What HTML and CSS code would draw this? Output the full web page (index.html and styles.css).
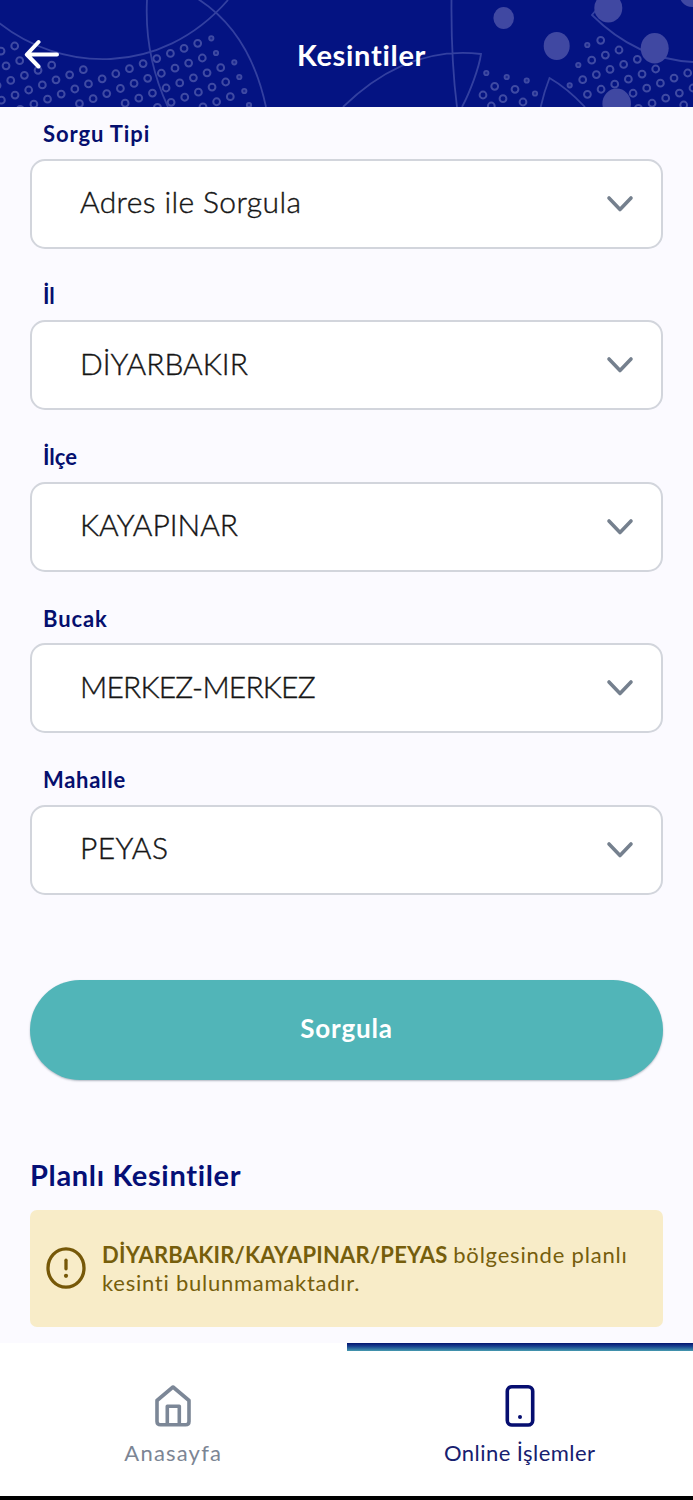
FILE: index.html
```html
<!DOCTYPE html>
<html lang="tr">
<head>
<meta charset="utf-8">
<title>Kesintiler</title>
<link rel="stylesheet" href="styles.css">
</head>
<body>
<div class="app">
  <header class="header">
    <svg class="header-art" viewBox="0 0 693 107" width="693" height="107" aria-hidden="true">
      <defs>
        <g id="dots">
          <path d="M14.7 46l-27.3 10.2M19.7 60.7l-27.3 10.2M51.7 65.2l-68.3 25.4M83.3 69.7l-109.2 40.6M197.7 43.3l-177.5 66M202.3 58l-136.5 50.8M220.7 67.7l-109.2 40.6M225.7 82l-68.3 25.4M230.3 96.7l-41 15.2"/>
          <path d="M600.7 40.3l-.1 0M619 50l-27.4 10.2M637.3 59.3l-55 20.5M655.7 69l-68.5 25.4M687.7 73l-68.5 25.4M693 88l-55 20.5M683.7 105l-.1 0M494.7 86.3h.1M483 95h.1M515 89.3h.1M503 98.7h.1M523 102h.1M491.3 106h.1"/>
        </g>
        <g id="small-dots">
          <path d="M211.3 38.3h.1M216 53h.1M234.3 62.3h.1M239.3 77h.1M244.3 91h.1M249 105h.1M587.3 45h.1M578.3 65h.1M569.7 85.3h.1M486.3 73h.1M506.7 77h.1M526.7 80.5h.1M535 93.5h.1"/>
        </g>
      </defs>
      <use href="#dots" class="ring-outer"/>
      <use href="#dots" class="ring-inner"/>
      <use href="#small-dots" class="small-outer"/>
      <use href="#small-dots" class="small-inner"/>
      <g class="curves">
        <path d="M-2 22C60 72 160 78 228 0M147 0C145 40 153 75 168 107M198-1C234 22 256 60 266 107"/>
        <path d="M343 107C385 66 430 48 481 54C479 68 470 92 462 107M451.5 0Q451 60 457 107M540.7 107Q544 92 549.5 78Q567 88 585 107M597 9L592 15C620 43 655 60 693 62"/>
      </g>
      <g class="discs">
        <ellipse cx="503.7" cy="18" rx="10.3" ry="11"/>
        <ellipse cx="556.7" cy="46" rx="13" ry="14"/>
        <ellipse cx="608.3" cy="8" rx="14" ry="14.5"/>
        <ellipse cx="654.7" cy="48.3" rx="14" ry="15.3"/>
        <ellipse cx="616.7" cy="103.5" rx="14.3" ry="15"/>
        <ellipse cx="692" cy="-7" rx="13" ry="14"/>
      </g>
    </svg>
    <svg class="back" viewBox="0 0 36 30" width="36" height="30" aria-label="Geri"><path d="M33 15.5H3M14.5 3L2.8 15.5L14.5 27.5"/></svg>
    <h1 class="title">Kesintiler</h1>
  </header>

  <main class="main">
    <div class="field">
      <label class="label l-type">Sorgu Tipi</label>
      <div class="select"><span class="v-type">Adres ile Sorgula</span><svg class="chevron" viewBox="0 0 28 18" width="28" height="18"><path d="M3 3L14 14.5L25 3"/></svg></div>
    </div>
    <div class="field">
      <label class="label l-il">İl</label>
      <div class="select"><span class="v-il">DİYARBAKIR</span><svg class="chevron" viewBox="0 0 28 18" width="28" height="18"><path d="M3 3L14 14.5L25 3"/></svg></div>
    </div>
    <div class="field">
      <label class="label l-ilce">İlçe</label>
      <div class="select"><span class="v-ilce">KAYAPINAR</span><svg class="chevron" viewBox="0 0 28 18" width="28" height="18"><path d="M3 3L14 14.5L25 3"/></svg></div>
    </div>
    <div class="field">
      <label class="label l-bucak">Bucak</label>
      <div class="select"><span class="v-bucak">MERKEZ-MERKEZ</span><svg class="chevron" viewBox="0 0 28 18" width="28" height="18"><path d="M3 3L14 14.5L25 3"/></svg></div>
    </div>
    <div class="field">
      <label class="label l-mahalle">Mahalle</label>
      <div class="select"><span class="v-mahalle">PEYAS</span><svg class="chevron" viewBox="0 0 28 18" width="28" height="18"><path d="M3 3L14 14.5L25 3"/></svg></div>
    </div>

    <button class="submit">Sorgula</button>

    <h2 class="section">Planlı Kesintiler</h2>
    <div class="alert">
      <svg class="alert-icon" viewBox="0 0 40 42" width="40" height="42"><ellipse cx="20" cy="21" rx="18" ry="19.2"/><path d="M20 13.2V21.8"/><circle cx="20" cy="28.8" r="2.1"/></svg>
      <p class="alert-text"><strong>DİYARBAKIR/KAYAPINAR/PEYAS</strong> <span class="a1">bölgesinde planlı</span><br><span class="a2">kesinti bulunmamaktadır.</span></p>
    </div>
  </main>

  <nav class="nav">
    <a class="tab">
      <svg class="tab-icon" viewBox="0 0 38 44" width="38" height="44"><path d="M3 16.5L19 3L35 16.5V37.5Q35 40.8 31.5 40.8H6.5Q3 40.8 3 37.5ZM13.3 40V22.2H25.3V40"/></svg>
      <span class="t-home">Anasayfa</span>
    </a>
    <a class="tab active">
      <svg class="tab-icon" viewBox="0 0 38 44" width="38" height="44"><rect x="6.3" y="2.8" width="25.4" height="38.2" rx="4.5"/><circle class="key" cx="19" cy="33" r="2"/></svg>
      <span class="t-online">Online İşlemler</span>
    </a>
  </nav>
</div>
</body>
</html>
```
FILE: styles.css
```css
* { box-sizing: border-box; }

body {
  margin: 0;
  background: #000;
  font-family: Lato, "Open Sans", sans-serif;
  font-variant-ligatures: none;
}

.app {
  width: 693px;
  height: 1500px;
  display: flex;
  flex-direction: column;
  background: #fbfaff;
  overflow: hidden;
  border-bottom: 4px solid #000;
}

.header {
  position: relative;
  flex: none;
  height: 107px;
  background: #041382;
  display: grid;
  grid-template-columns: 105px 1fr 75px;
  align-items: center;
  padding-top: 2px;
}
.header-art { position: absolute; inset: 0; }
.ring-outer, .ring-inner, .small-outer, .small-inner {
  fill: none;
  stroke-linecap: round;
  stroke-dasharray: 0 14.565;
}
.ring-outer { stroke: #3f4aa3; stroke-width: 8.8; }
.ring-inner { stroke: #041382; stroke-width: 4.8; }
.small-outer { stroke: #3f4aa3; stroke-width: 6.2; }
.small-inner { stroke: #1d2a90; stroke-width: 2.4; }
.curves { fill: none; stroke: #3340a0; stroke-width: 1.8; }
.discs { fill: #4048a2; }

.back {
  position: relative;
  margin: 0 0 1px 24px;
  fill: none;
  stroke: #fff;
  stroke-width: 4;
  stroke-linecap: round;
  stroke-linejoin: round;
}
.title {
  position: relative;
  margin: 0;
  text-align: center;
  color: #fff;
  font-size: 29px;
  line-height: 36px;
  font-weight: 700;
  letter-spacing: .7px;
}

.main {
  flex: none;
  height: 1236px;
  padding: 11px 30px 0;
  display: flex;
  flex-direction: column;
}
.field { height: 161.6px; flex: none; }
.label {
  display: block;
  height: 40.5px;
  padding-left: 13px;
  color: #050f6e;
  font-size: 22px;
  line-height: 31px;
  font-weight: 700;
}
.l-type, .l-bucak { letter-spacing: .9px; }
.l-mahalle { letter-spacing: .7px; }
.select {
  height: 90px;
  padding: 0 27px 5px 48px;
  display: flex;
  align-items: center;
  justify-content: space-between;
  background: #fff;
  border: 2px solid #d2d5dc;
  border-radius: 15px;
  color: #151515;
  font-size: 30px;
  font-weight: 300;
  -webkit-text-stroke: .4px #151515;
}
.v-type { letter-spacing: .38px; }
.v-bucak { letter-spacing: -.8px; }
.v-mahalle { letter-spacing: .4px; }
.chevron {
  margin-top: 5px;
  fill: none;
  stroke: #75808e;
  stroke-width: 3.6;
  stroke-linecap: round;
  stroke-linejoin: round;
}

.submit {
  flex: none;
  height: 100px;
  margin-top: 54px;
  padding: 0 0 3px;
  border: 0;
  border-radius: 50px;
  background: #51b5b8;
  box-shadow: 0 1px 2px rgba(40, 60, 80, .35);
  color: #fff;
  font: 700 26px Lato, sans-serif;
  letter-spacing: .8px;
}
.section {
  margin: 75px 0 16px;
  color: #050f76;
  font-size: 29px;
  line-height: 39px;
  font-weight: 700;
  letter-spacing: .65px;
}
.alert {
  flex: none;
  height: 117px;
  padding: 0 16px;
  display: flex;
  align-items: center;
  gap: 16px;
  background: #f8ecc8;
  border-radius: 7px;
  color: #765e0c;
}
.alert-icon {
  flex: none;
  fill: none;
  stroke: #765808;
  stroke-width: 3.3;
  stroke-linecap: round;
}
.alert-icon circle { fill: #765808; stroke: none; }
.alert-text {
  margin: 2px 0 0;
  font-size: 22px;
  line-height: 28px;
  white-space: nowrap;
}
.alert-text strong { letter-spacing: .2px; }
.a1 { letter-spacing: .8px; }
.a2 { letter-spacing: .75px; }

.nav {
  flex: 1;
  display: flex;
  background: #fff;
}
.tab {
  flex: 1;
  display: flex;
  flex-direction: column;
  align-items: center;
  gap: 11px;
  padding-top: 41px;
  color: #7c8594;
  font-size: 22px;
  line-height: 28px;
}
.tab.active {
  color: #17206f;
  background: linear-gradient(#03146f, #173f8e 40%, #459aaf) top / 100% 8px no-repeat;
}
.t-home { letter-spacing: 1.2px; }
.t-online { letter-spacing: .45px; }
.tab-icon { fill: none; stroke: #7c8797; stroke-width: 3.6; stroke-linejoin: round; }
.active .tab-icon { stroke: #060e70; }
.active .key { fill: #060e70; stroke: none; }
```
